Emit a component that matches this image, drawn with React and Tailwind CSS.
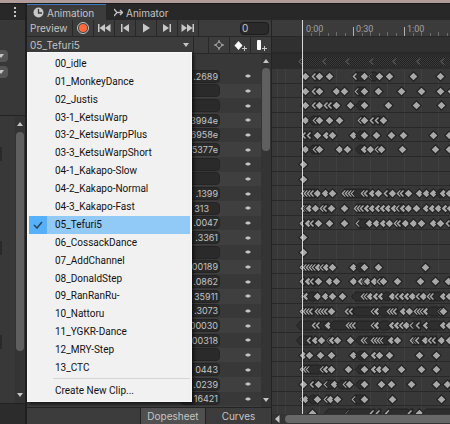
import React from "react";

const CLIPS = [
  "00_idle", "01_MonkeyDance", "02_Justis", "03-1_KetsuWarp", "03-2_KetsuWarpPlus",
  "03-3_KetsuWarpShort", "04-1_Kakapo-Slow", "04-2_Kakapo-Normal", "04-3_Kakapo-Fast",
  "05_Tefuri5", "06_CossackDance", "07_AddChannel", "08_DonaldStep", "09_RanRanRu-",
  "10_Nattoru", "11_YGKR-Dance", "12_MRY-Step", "13_CTC",
];

// Each row: plain number = full key, "<n" = partly covered key, "a-b" = dense run of keys.
const ROWS = [
  [".2689", "5 <14 19 29 <55 59-62 64 <71 73-75 79 89 113 140"],
  ["", "5 <14 19 36 44 <57 60-62 64 78 101 121 140 151"],
  ["", "5 <14 19 <26 <30 36 50 59-62 64 88 116 141"],
  ["3994e", "5 12-14 <15 19 29 39 <60 64 <72 <77 83"],
  ["6958e", "<4 <9 17 26 32 53 59-62 64 76 91 103 133 149"],
  ["5377e", "5 12-14 <15 19 39 47 59-62 64 70 <77 81 102 135 149"],
  ["", "3"],
  ["", "3"],
  [".1399", "<3 <6 <9 <12 17 25 32 <44 <47 <50 <53 56-62 <63 <66 72 78 <86 92 <99 <102 108 119 126 133 139-141 143 149"],
  ["313", "<3 <6 9 15 <22 <25 31 44 <56 <59 <62 67 72 78 83 88 94 <98 <101 103 108 116 126 132 138 145 150"],
  [".0047", "<2 8 <12 18 29 44 <58 61-66 69 76 83 89 <96 <99 105 113 121 133 140 <148"],
  [".3361", "3"],
  ["", "3"],
  ["00189", "<2 <5 <8 <11 <14 18 <22 26 32 53 59-62 64 78 125"],
  [".0862", "<2 8 <12 18 29 36 53 61 <64 67 74 <79 83 97 120 135 148"],
  ["35911", "<3 6 10-14 17 25 32 42 55-62 <63 <66 70 76 81 85-88 92 <97 102 107 112 <118 123 <129 <132 136-140 143 149"],
  [".3073", "<2 <5 <8 <11 <17 <20 <23 <26 31 <47 <51 56-72 <73 77 81-88 <89 <92 <95 103 109 <116 <119 <122 126 130-138 <140 143"],
  ["00030", "0-12 <14 <18 22-25 <26 28 33-46 <48 <51 <54 58-72 <73 77 81-88 92 97 102 106 <112 115-117 <118 126 130-140 143 149"],
  ["00318", "0-8 <9 15 21 <29 32 37 50 59-61 <63 <66 69-72 <73 <76 <79 <82 85-88 91 97 <112 <115 118 121-123 125 <130 <134 141 149"],
  ["", "3 9 20 31 53 59-62 64 74 79 89 119 136"],
  ["0443", "<2 <5 <8 11-20 <22 26 31 48 59-62 64 74 79 85 101 121 136"],
  [".0239", "3 <12 18 <26 29-32 34 40-43 <45 49 59-62 64 81 91 111 136 147"],
  ["16421", "<2 5 11-14 17 <26 30 37 <54 57-62 64 92 141"],
  ["", "12 28-46 <48 50-70 <72 <78 88 91-107 <110 119 126-150"],
];

function Keys({ spec }) {
  return (
    <svg className="block h-full w-full" aria-hidden="true">
      <g transform="translate(28.5 7.5)">
        {spec.split(" ").map((t, i) => {
          if (t[0] === "<") {
            const x = Number(t.slice(1));
            return (
              <g key={i}>
                <path d={`M${x - 4} 0l4-5h3v10h-3z`} fill="#242424" />
                <path d={`M${x + 1} -3l-3 3l3 3`} fill="none" stroke="#a8a8a8" strokeWidth="1.5" />
              </g>
            );
          }
          if (t.includes("-")) {
            const [a, b] = t.split("-").map(Number);
            return <path key={i} d={`M${a - 4} 0l4-4.5H${b}l4 4.5l-4 4.5H${a}z`} fill="url(#dense)" stroke="#202020" />;
          }
          const x = Number(t);
          return (
            <g key={i}>
              <path d={`M${x} -5.500l5.500 5.500l-5.500 5.500l-5.500-5.500z`} fill="#222" />
              <path d={`M${x} -3.800l3.800 3.800l-3.800 3.800l-3.800-3.800z`} fill="#a8a8a8" />
            </g>
          );
        })}
      </g>
    </svg>
  );
}

function Arrow({ dir }) {
  const d = { up: "M2 6h6L5 2z", down: "M2 2h6L5 6z", left: "M6.500 0v8L2 4z" }[dir];
  return (
    <svg width="10" height="8" viewBox="0 0 10 8" className="block shrink-0" aria-hidden="true">
      <path d={d} fill="#c4c4c4" />
    </svg>
  );
}

function Tool({ label, children }) {
  return (
    <button type="button" aria-label={label} className="flex h-full w-[21px] shrink-0 items-center justify-center border-l border-[#282828]">
      <svg width="16" height="14" viewBox="0 0 16 14" fill="#c8c8c8" aria-hidden="true">{children}</svg>
    </button>
  );
}

function SidePanel() {
  return (
    <aside className="flex w-[25px] shrink-0 flex-col bg-[#383838]">
      <div className="flex h-4 shrink-0 items-center justify-center bg-[#282828] pl-1">
        <button type="button" aria-label="Panel options">
          <svg width="4" height="12" viewBox="0 0 4 12" className="block" fill="#c4c4c4"><path d="M1 1h2v2H1zM1 5h2v2H1zM1 9h2v2H1z" /></svg>
        </button>
      </div>
      <div className="flex h-24 shrink-0 flex-col gap-1 border-b border-[#232323] pt-[30px]">
        {["Tag", "Layer"].map((n) => (
          <button key={n} type="button" aria-label={n} className="flex h-3 w-2 items-center justify-end overflow-hidden rounded-r-sm bg-[#555] pr-0.5"><Arrow dir="down" /></button>
        ))}
      </div>
      <div className="flex min-h-0 flex-1">
        <div className="flex flex-1 flex-col gap-20 pt-[31px]">
          <div className="h-3.5 w-0.5 bg-[#2a2a2a]" />
          <div className="h-3.5 w-0.5 bg-[#2a2a2a]" />
          <div className="h-3.5 w-0.5 bg-[#2a2a2a]" />
        </div>
        <div className="flex w-[10px] flex-col items-center bg-[#343434] py-1">
          <Arrow dir="up" />
          <div className="mb-10 mt-1 w-2 flex-1 rounded-full bg-[#5f5f5f]" />
          <Arrow dir="down" />
        </div>
      </div>
      <div className="h-[21px] shrink-0 border-t border-[#222] bg-[#2c2c2c]" />
    </aside>
  );
}

function ClipMenu() {
  return (
    <div role="menu" aria-label="Animation clips" className="absolute left-0 top-[15px] z-10 w-[165px] border border-[#f8f8f8] bg-[#f1f1f1] px-px pt-0.5 [font-family:Roboto,sans-serif] text-[10px] leading-4 text-[#111] shadow-[2px_2px_3px_rgba(0,0,0,0.6)]">
      <div className="grid h-[322px] grid-rows-[repeat(18,minmax(0,1fr))]">
        {CLIPS.map((c) => {
          const on = c === "05_Tefuri5";
          return (
            <button key={c} type="button" role="menuitemradio" aria-checked={on} className={on ? "flex items-center bg-[#91c9f7] text-left" : "flex items-center text-left"}>
              <span className={on ? "flex h-full w-[18px] items-center justify-center bg-[#56b0fa]" : "w-[18px]"}>
                {on && <svg width="10" height="8" viewBox="0 0 10 8"><path d="M1 4l3 3L9 1" fill="none" stroke="#26435e" strokeWidth="1.500" /></svg>}
              </span>
              <span className="pl-2">{c}</span>
            </button>
          );
        })}
      </div>
      <hr className="mb-1 ml-6 mt-px border-[#d5d5d5]" />
      <button type="button" role="menuitem" className="mb-0.5 block pl-[26px]">Create New Clip...</button>
    </div>
  );
}

function Controls() {
  return (
    <section className="flex w-[244px] shrink-0 flex-col">
      <div className="flex h-[17px] shrink-0 items-center border-b border-[#282828] bg-[#3c3c3c]">
        <button type="button" className="w-[45px] pl-[3px] text-left">Preview</button>
        <Tool label="Record"><circle cx="8" cy="7" r="5.500" fill="none" stroke="#c8c8c8" /><circle cx="8" cy="7" r="4" fill="#ff6b3d" /></Tool>
        <Tool label="First frame"><path d="M2 3h1.500v8H2zM9 3v8L3.500 7zM14.500 3v8L9 7z" /></Tool>
        <Tool label="Previous key"><path d="M4 3h1.500v8H4zM12 3v8L6 7z" /></Tool>
        <Tool label="Play"><path d="M5 2.500v9L12 7z" /></Tool>
        <Tool label="Next key"><path d="M4 3v8l6-4zM10.500 3H12v8h-1.500z" /></Tool>
        <Tool label="Last frame"><path d="M1.500 3v8L7 7zM7 3v8l5.500-4zM12.500 3H14v8h-1.500z" /></Tool>
        <div className="flex h-full flex-1 items-center justify-end border-l border-[#282828] pr-0.5">
          <input aria-label="Frame" defaultValue="0" className="h-[13px] w-[29px] rounded-sm border border-[#1c1c1c] bg-[#2a2a2a] pl-px leading-3 outline-none" />
        </div>
      </div>
      <div className="relative flex h-[17px] shrink-0 border-b border-[#282828] bg-[#3c3c3c]">
        <button type="button" aria-haspopup="menu" aria-expanded="true" className="flex w-[166px] items-center justify-between pl-[3px] pr-0.5">
          05_Tefuri5<Arrow dir="down" />
        </button>
        <div className="flex-1 border-l border-[#282828]" />
        <Tool label="Filter by selection"><path d="M8 3.500L11.500 7L8 10.500L4.500 7zM8 2v3M8 9v3M3 7h3M10 7h3" fill="none" stroke="#b4b4b4" /></Tool>
        <Tool label="Add keyframe"><path d="M6.500 3l4 4.500l-4 4.500l-4-4.500z" fill="#fff" /><path d="M10 10.500h5M12.500 8v5" stroke="#c8c8c8" /></Tool>
        <Tool label="Add event"><rect x="4" y="2" width="4" height="10" rx="1" fill="#fff" /><path d="M9 10.500h5M11.500 8v5" stroke="#c8c8c8" /></Tool>
        <ClipMenu />
      </div>
      <div className="flex min-h-0 flex-1 overflow-hidden">
        <div className="h-full flex-1 overflow-hidden pt-[15px]">
          <div className="grid h-[352px] grid-rows-[repeat(24,minmax(0,1fr))]">
            {ROWS.map(([v], i) => (
              <div key={i} className={i % 2 ? "flex items-center bg-[#3f3f3f] pl-[153px]" : "flex items-center pl-[153px]"}>
                <input aria-label={"Property value " + (i + 1)} defaultValue={v} className={v === "313" ? "h-[13px] w-10 rounded-sm border border-[#242424] bg-[#2a2a2a] pr-[10px] text-right text-[9px] leading-3 outline-none" : "h-[13px] w-10 rounded-sm border border-[#242424] bg-[#2a2a2a] pr-px text-right text-[9px] leading-3 outline-none"} />
                <button type="button" aria-label={"Key options " + (i + 1)} className="ml-[25px]">
                  <svg width="6" height="4" viewBox="0 0 6 4" className="block"><path d="M0 2l2-1.500h2L6 2L4 3.500H2z" fill="#c4c4c4" /></svg>
                </button>
              </div>
            ))}
          </div>
        </div>
        <div className="flex w-[10px] shrink-0 flex-col items-center bg-[#343434] py-[3px]">
          <Arrow dir="up" />
          <div className="mt-[3px] h-[83px] w-2 rounded-full bg-[#5f5f5f]" />
          <div className="flex-1" />
          <Arrow dir="down" />
        </div>
      </div>
      <div className="flex h-[17px] shrink-0 items-stretch justify-end border-t border-[#232323] bg-[#3c3c3c]">
        <button type="button" className="w-[65px] border-l border-[#232323] bg-[#505050]">Dopesheet</button>
        <button type="button" className="w-[66px] border-l border-[#232323]">Curves</button>
      </div>
    </section>
  );
}

function Timeline() {
  const ticks = Array.from({ length: 60 }, (_, i) => i);
  return (
    <section className="relative flex min-w-0 flex-1 flex-col border-l border-[#232323] bg-[#383838]">
      <svg width="0" height="0" className="absolute" aria-hidden="true">
        <defs>
          <pattern id="dense" width="2" height="2" patternUnits="userSpaceOnUse">
            <path d="M0 0h2v2H0z" fill="#222" /><path d="M0 0h1v1H0zM1 1h1v1H1z" fill="#3a3a3a" />
          </pattern>
        </defs>
      </svg>
      <div className="h-[17px] shrink-0 overflow-hidden border-b border-[#282828] bg-[#3b3b3b]">
        <svg className="block h-4 w-full [font-family:Roboto,sans-serif] text-[9px]" fill="#a0a0a0">
          {ticks.map((i) => {
            const x = 30.5 + Math.round(i * 8.5);
            return <path key={i} d={`M${x} 16V${i % 6 === 0 ? 7 : i % 2 ? 13 : 12}`} stroke={i % 6 === 0 ? "#b0b0b0" : "#6c6c6c"} />;
          })}
          <text x="34" y="12">0:00</text><text x="84" y="12">0:30</text><text x="135" y="12">1:00</text>
        </svg>
      </div>
      <div className="h-[17px] shrink-0 border-b-2 border-[#282828] bg-[#303030]" />
      <div className="h-[15px] shrink-0 bg-[#2c2c2c]">
        <svg className="block h-full w-full" aria-hidden="true">
          <rect x="28" y="3" width="100%" height="9" fill="url(#dense)" />
          {ticks.slice(0, 40).map((i) => <path key={i} d={`M${30 + Math.round(i * 23.6)} 4.500l-3 3l3 3`} fill="none" stroke="#707070" />)}
        </svg>
      </div>
      <div className="min-h-0 flex-1 overflow-hidden">
        <div className="grid h-[352px] grid-rows-[repeat(24,minmax(0,1fr))] bg-[repeating-linear-gradient(to_right,#404040_0px,#404040_1px,#383838_1px,#383838_17px)] bg-[position:13px_0]">
          {ROWS.map(([, k], i) => (
            <div key={i} className="min-h-0 overflow-hidden border-b border-[#282828]"><Keys spec={k} /></div>
          ))}
        </div>
      </div>
      <div className="flex h-[10px] shrink-0 items-center bg-[#343434] pl-px">
        <Arrow dir="left" />
        <div className="ml-0.5 h-2 flex-1 rounded-l-full bg-[#686868]" />
      </div>
      <div className="absolute bottom-[10px] left-[30px] top-0 w-px bg-[#d8d8d8]" />
    </section>
  );
}

export default function App() {
  return (
    <main className="flex h-screen flex-col overflow-hidden bg-[#1f1f1f] [font-family:Inter,sans-serif] text-[10px] leading-[14px] text-[#c4c4c4]">
      <div className="h-1 shrink-0 border-b border-[#191919] bg-[#b29b9b]" />
      <div className="flex min-h-0 flex-1 gap-0.5">
        <SidePanel />
        <div className="flex min-w-0 flex-1 flex-col bg-[#383838]">
          <nav className="flex h-4 shrink-0 bg-[#282828]">
            <button type="button" className="flex w-[79px] shrink-0 items-center gap-[3px] border-t border-[#3a79bb] bg-[#3c3c3c] pl-1.5">
              <svg width="11" height="11" viewBox="0 0 11 11" className="shrink-0"><circle cx="5.500" cy="5.500" r="5" fill="#c8c8c8" /><path d="M5.500 2v4H9" fill="none" stroke="#3c3c3c" strokeWidth="1.300" /></svg>
              Animation
            </button>
            <button type="button" className="flex items-center gap-[3px] pl-2 pt-px">
              <svg width="9" height="9" viewBox="0 0 9 9" className="shrink-0"><path d="M0 1L3 4.500L0 8M3 4.500h5M6 2l2.500 2.500L6 7" fill="none" stroke="#c4c4c4" strokeWidth="1.300" /></svg>
              Animator
            </button>
          </nav>
          <div className="flex min-h-0 flex-1">
            <Controls />
            <Timeline />
          </div>
        </div>
      </div>
    </main>
  );
}
